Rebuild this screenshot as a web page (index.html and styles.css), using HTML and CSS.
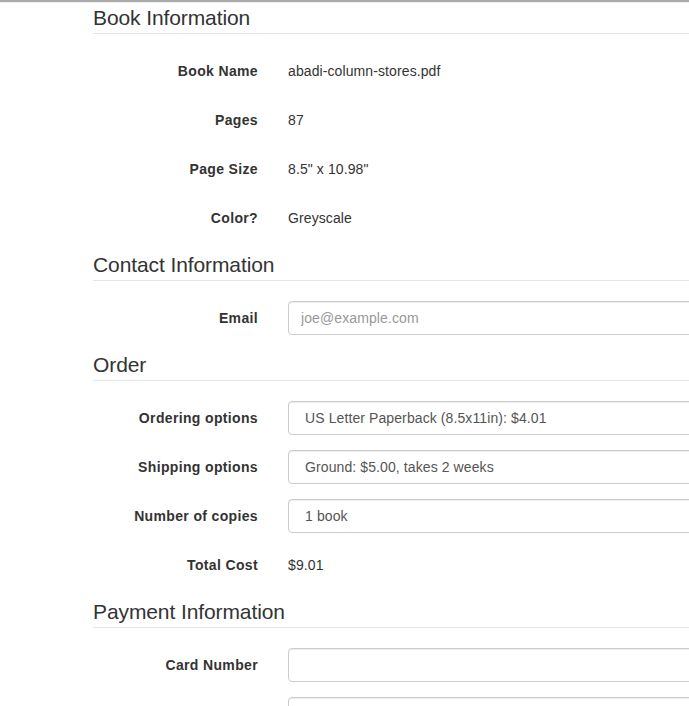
FILE: index.html
```html
<!DOCTYPE html>
<html lang="en">
<head>
<meta charset="utf-8">
<title>Order Book</title>
<link rel="stylesheet" href="styles.css">
</head>
<body>
<div class="topbar"></div>
<form class="page">
  <fieldset class="section">
    <legend class="legend">Book Information</legend>
    <div class="row"><span class="label">Book Name</span><span class="static">abadi-column-stores.pdf</span></div>
    <div class="row"><span class="label">Pages</span><span class="static">87</span></div>
    <div class="row"><span class="label">Page Size</span><span class="static">8.5" x 10.98"</span></div>
    <div class="row"><span class="label">Color?</span><span class="static">Greyscale</span></div>
  </fieldset>
  <fieldset class="section">
    <legend class="legend">Contact Information</legend>
    <div class="row"><label class="label" for="email">Email</label><input id="email" class="control" type="email" placeholder="joe@example.com"></div>
  </fieldset>
  <fieldset class="section">
    <legend class="legend">Order</legend>
    <div class="row"><label class="label" for="ord">Ordering options</label><select id="ord" class="control select"><option>US Letter Paperback (8.5x11in): $4.01</option></select></div>
    <div class="row"><label class="label" for="ship">Shipping options</label><select id="ship" class="control select"><option>Ground: $5.00, takes 2 weeks</option></select></div>
    <div class="row"><label class="label" for="copies">Number of copies</label><select id="copies" class="control select"><option>1 book</option></select></div>
    <div class="row"><span class="label">Total Cost</span><span class="static">$9.01</span></div>
  </fieldset>
  <fieldset class="section">
    <legend class="legend">Payment Information</legend>
    <div class="row"><label class="label" for="card">Card Number</label><input id="card" class="control" type="text"></div>
    <div class="row"><label class="label" for="exp">Expiry</label><input id="exp" class="control" type="text"></div>
  </fieldset>
</form>
</body>
</html>
```
FILE: styles.css
```css
html, body {
  margin: 0;
  padding: 0;
  overflow: hidden;
  background: #fff;
}
body {
  font-family: "Liberation Sans", Arial, sans-serif;
  font-size: 14px;
  line-height: 20px;
  color: #333;
}
.topbar {
  height: 2px;
  background: #a9a9a9;
  border-bottom: 1px solid #f0f0f0;
}
.page {
  margin: 0 0 0 93px;
  width: 1140px;
}
.section {
  border: 0;
  margin: 0;
  padding: 0;
  min-width: 0;
}
.legend {
  display: block;
  width: 100%;
  padding: 0;
  margin: 0 0 20px;
  font-size: 21px;
  line-height: 30px;
  letter-spacing: -0.1px;
  color: #333;
  border-bottom: 1px solid #e5e5e5;
}
.row {
  display: grid;
  grid-template-columns: 165px 945px;
  column-gap: 30px;
  margin-bottom: 15px;
  min-height: 34px;
}
.label {
  text-align: right;
  font-weight: bold;
  letter-spacing: 0.35px;
  padding-top: 7px;
}
.static {
  padding-top: 7px;
  padding-bottom: 7px;
  letter-spacing: 0.1px;
}
.control {
  display: block;
  box-sizing: border-box;
  width: 100%;
  height: 34px;
  margin: 0;
  padding: 6px 12px;
  font-family: "Liberation Sans", Arial, sans-serif;
  font-size: 14px;
  line-height: 20px;
  letter-spacing: 0.1px;
  color: #555;
  background: #fff;
  border: 1px solid #ccc;
  border-radius: 4px;
  box-shadow: inset 0 1px 1px rgba(0, 0, 0, 0.075);
  -webkit-appearance: none;
  appearance: none;
}
.select {
  padding-left: 16px;
}
.control::placeholder {
  color: #999;
}
```
